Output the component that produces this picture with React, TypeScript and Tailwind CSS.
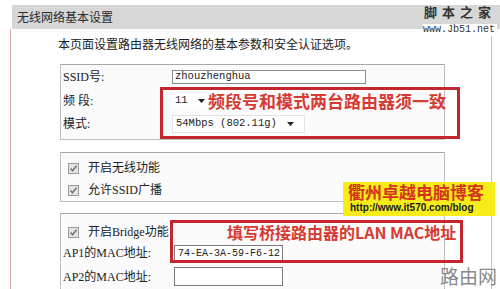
import React from 'react';

const cjk = "font-['Liberation_Serif','Noto_Sans_CJK_SC',serif]";

function Check() {
  return (
    <span className="w-[11px] h-[11px] shrink-0 border border-[#9a9a9a] bg-[#e4e4e4] flex items-center justify-center">
      <svg width="9" height="9" viewBox="0 0 9 9">
        <path d="M1.5 4.5 L3.5 6.8 L7.5 1.8" stroke="#6b7785" strokeWidth="1.5" fill="none" />
      </svg>
    </span>
  );
}

function Caret() {
  return (
    <svg width="7" height="4" viewBox="0 0 7 4" className="shrink-0">
      <path d="M0 0 H7 L3.5 4 Z" fill="#222" />
    </svg>
  );
}

export default function App() {
  return (
    <div className={`w-[500px] h-[289px] overflow-hidden bg-white relative text-[#222] ${cjk}`}>
      <div className="pt-[5px]">
        {/* Title bar */}
        <div className="ml-[12px] h-[24px] bg-[#d7d7d7] flex items-center pl-[5px] text-[12px] text-[#2a2a2a] font-['Noto_Sans_CJK_SC',sans-serif]">
          无线网络基本设置
        </div>

        {/* Page panel */}
        <div className="ml-[10px] w-[482px] h-[260px] border-l border-r border-l-[#d6a9a9] border-r-[#c4c4c4] pl-[47px]">
          <p className="pt-[7px] text-[12px] leading-[16px] font-['Noto_Sans_CJK_SC',sans-serif]">
            本页面设置路由器无线网络的基本参数和安全认证选项。
          </p>

          {/* Basic params */}
          <div className="mt-[12px] ml-[2px] w-[385px] h-[76px] border border-[#c0c0c0] border-t-[#a8a8a8] bg-[#fbfbfb] pl-[2px] text-[12px]">
            <div className="mt-[5px] h-[14px] flex items-center">
              <span className="w-[109px]">SSID号:</span>
              <div className="w-[194px] h-[14px] border border-[#8a8a8a] bg-white flex items-center pl-[2px] font-['Liberation_Mono',monospace] text-[10.5px]">
                zhouzhenghua
              </div>
            </div>
            <div className="mt-[10px] h-[14px] flex items-center">
              <span className="w-[109px]">频 段:</span>
              <div className="w-[38px] h-[14px] bg-white flex items-center gap-[10px] pl-[3px] font-['Liberation_Mono',monospace] text-[10.5px]">
                11 <Caret />
              </div>
            </div>
            <div className="mt-[7px] h-[18px] flex items-center">
              <span className="w-[109px]">模式:</span>
              <div className="w-[133px] h-[18px] border border-[#e2e2e2] bg-white flex items-center gap-[10px] pl-[3px] font-['Liberation_Mono',monospace] text-[10.5px] whitespace-nowrap">
                54Mbps (802.11g) <Caret />
              </div>
            </div>
          </div>

          {/* Wireless switches */}
          <div className="mt-[12px] ml-[2px] w-[385px] h-[50px] border border-[#c0c0c0] border-t-[#a8a8a8] bg-[#fbfbfb] pl-[7px] text-[12px]">
            <div className="mt-[7px] h-[16px] flex items-center gap-[9px]">
              <Check />
              <span>开启无线功能</span>
            </div>
            <div className="mt-[6px] h-[16px] flex items-center gap-[9px]">
              <Check />
              <span>允许SSID广播</span>
            </div>
          </div>

          {/* Bridge */}
          <div className="mt-[11px] ml-[2px] w-[385px] h-[80px] border border-[#c0c0c0] border-t-[#a8a8a8] bg-[#fbfbfb] text-[12px]">
            <div className="mt-[10px] pl-[7px] h-[16px] flex items-center gap-[9px]">
              <Check />
              <span>开启Bridge功能</span>
            </div>
            <div className="mt-[5px] pl-[2px] h-[16px] flex items-center">
              <span className="w-[111px]">AP1的MAC地址:</span>
              <div className="w-[109px] h-[16px] border border-[#7a7a7a] bg-white flex items-center pl-[3px] font-['Liberation_Mono',monospace] text-[10px] whitespace-nowrap overflow-hidden">
                74-EA-3A-59-F6-12
              </div>
            </div>
            <div className="mt-[6px] pl-[2px] h-[19px] flex items-center">
              <span className="w-[111px]">AP2的MAC地址:</span>
              <div className="w-[109px] h-[19px] border border-[#7a7a7a] bg-white" />
            </div>
          </div>
        </div>
      </div>

      {/* Site watermark, top right */}
      <div className="absolute left-[424px] top-[3px] text-[13px] leading-[18px] tracking-[5px] font-semibold text-[#333] font-['Noto_Sans_CJK_SC',sans-serif]">
        脚本之家
      </div>
      <div className="absolute left-[423px] top-[24px] text-[10px] leading-[12px] text-[#333] font-['Liberation_Mono',monospace] bg-white pr-[2px]">
        www.Jb51.net
      </div>

      {/* Annotation 1 */}
      <div className="absolute left-[160px] top-[87px] w-[300px] h-[52px] border-[3px] border-[#c3272d] pl-[45px] pt-[1px]">
        <span className="block text-[17px] leading-[20px] font-bold text-[#d63a32] font-['Noto_Sans_CJK_SC',sans-serif]">
          频段号和模式两台路由器须一致
        </span>
      </div>

      {/* Blog badge */}
      <div className="absolute left-[343px] top-[182px] w-[152px] h-[34px] bg-[#f5ec1a] pl-[5px]">
        <div className="text-[17px] leading-[20px] font-bold text-[#d6341c] font-['Noto_Sans_CJK_SC',sans-serif]">
          衢州卓越电脑博客
        </div>
        <div className="pl-[2px] text-[10px] leading-[12px] font-bold text-[#1a1a1a] font-['Liberation_Sans',sans-serif]">
          http://www.it570.com/blog
        </div>
      </div>

      {/* Annotation 2 */}
      <div className="absolute left-[170px] top-[220px] w-[293px] h-[43px] border-[3px] border-[#c3272d] pl-[54px]">
        <span className="block text-[16px] leading-[18px] font-bold text-[#d63a32] font-['Noto_Sans_CJK_SC',sans-serif]">
          填写桥接路由器的LAN MAC地址
        </span>
      </div>

      {/* Bottom watermark */}
      <div className="absolute left-[440px] top-[264px] text-[19px] leading-[24px] text-[#8a8a8a] font-['Noto_Sans_CJK_SC',sans-serif]">
        路由网
      </div>
    </div>
  );
}
